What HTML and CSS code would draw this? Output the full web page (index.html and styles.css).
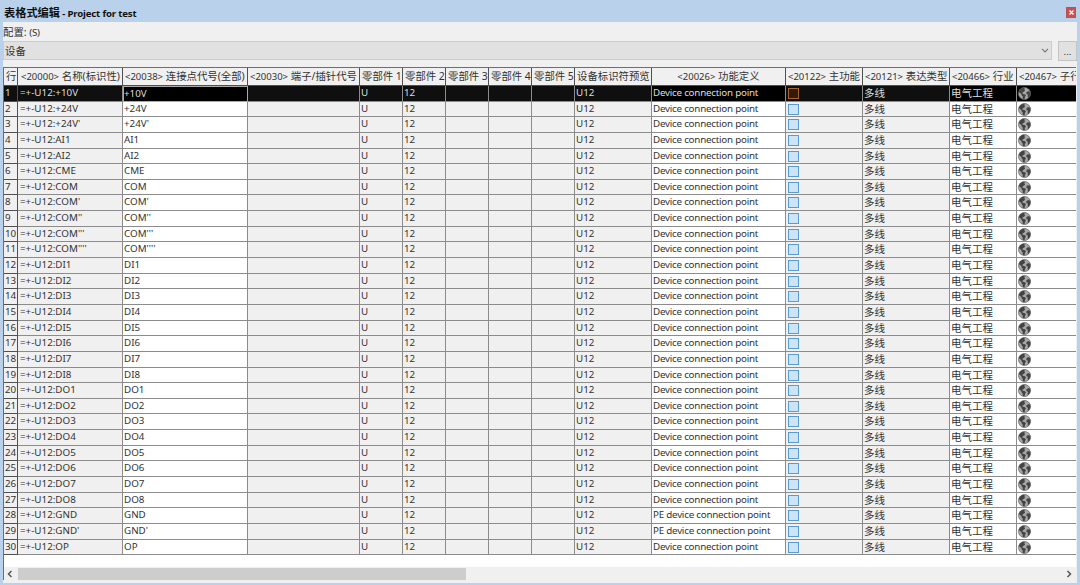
FILE: index.html
```html
<!DOCTYPE html>
<html lang="zh-CN">
<head>
  <meta charset="UTF-8" />
  <title>表格式编辑 - Project for test</title>
  <link rel="stylesheet" href="styles.css">
</head>
<body>
  <!-- shared icons -->
  <svg class="defs" width="0" height="0">
    <symbol id="globe" viewBox="0 0 13 13">
      <circle class="sea" cx="6.5" cy="6.5" r="6" />
      <path class="land" d="M.8 5 L2 2.6 L4.4 .9 L6.9 .8 L6.2 2.2 L7.2 3 L6.3 4.5 L5 5.2 L4.2 6 L5 6.7 L7 7.3 L8 8.5 L7 10 L6.6 12.3 L4.8 12 L4.7 9.8 L3.6 8.2 L3.3 6.9 L1.9 5.9Z M12.3 4.8 L12.4 7.2 L11.5 9.6 L9.9 11.2 L9.7 9.3 L9.9 7.8 L8.5 7 L8.2 5.8 L9.2 4.6 L10.8 4.3Z" />
    </symbol>
  </svg>

  <div class="window">
    <div class="titlebar">
      <h1><span class="title-cn">表格式编辑</span> - Project for test</h1>
      <button class="close" aria-label="关闭">
        <svg width="5" height="5" viewBox="0 0 5 5"><path d="M.5 .5 L4.5 4.5 M4.5 .5 L.5 4.5" /></svg>
      </button>
    </div>

    <div class="content">
      <div class="config-label">配置: <span>(S)</span></div>
      <div class="config-row">
        <div class="combo">
          <span>设备</span>
          <svg width="8" height="5" viewBox="0 0 8 5"><path d="M1 .8 L4 3.9 L7 .8" /></svg>
        </div>
        <button class="more">...</button>
      </div>

      <div class="grid">
        <div class="row head">
          <div>行</div>
          <div><i>&lt;20000&gt;</i> 名称(标识性)</div>
          <div><i>&lt;20038&gt;</i> 连接点代号(全部)</div>
          <div><i>&lt;20030&gt;</i> 端子/插针代号</div>
          <div>零部件 1</div>
          <div>零部件 2</div>
          <div>零部件 3</div>
          <div>零部件 4</div>
          <div>零部件 5</div>
          <div>设备标识符预览</div>
          <div class="center"><i>&lt;20026&gt;</i> 功能定义</div>
          <div><i>&lt;20122&gt;</i> 主功能</div>
          <div><i>&lt;20121&gt;</i> 表达类型</div>
          <div><i>&lt;20466&gt;</i> 行业</div>
          <div><i>&lt;20467&gt;</i> 子行</div>
        </div>
        <div id="rows"></div>
        <div class="scrollbar">
          <svg width="6" height="8" viewBox="0 0 6 8"><path d="M4.5 1 L1.5 4 L4.5 7" /></svg>
          <div class="track"><div class="thumb"></div></div>
          <svg width="6" height="8" viewBox="0 0 6 8"><path d="M1.5 1 L4.5 4 L1.5 7" /></svg>
        </div>
      </div>
    </div>
  </div>

  <script>
    const pins = [
      "+10V", "+24V", "+24V'", "AI1", "AI2", "CME",
      "COM", "COM'", "COM''", "COM'''", "COM''''",
      "DI1", "DI2", "DI3", "DI4", "DI5", "DI6", "DI7", "DI8",
      "DO1", "DO2", "DO3", "DO4", "DO5", "DO6", "DO7", "DO8",
      "GND", "GND'", "OP"
    ];

    document.getElementById('rows').innerHTML = pins.map((pin, i) => {
      const def = (pin.startsWith('GND') ? 'PE device' : 'Device') + ' connection point';
      return `<div class="row${i === 0 ? ' selected' : ''}">
        <div class="num">${i + 1}</div>
        <div class="name">=+-U12:${pin}</div>
        <div class="edit pin">${pin}</div>
        <div></div>
        <div>U</div>
        <div>12</div>
        <div></div>
        <div></div>
        <div></div>
        <div>U12</div>
        <div class="edit def">${def}</div>
        <div><span class="check"></span></div>
        <div class="cn">多线</div>
        <div class="edit cn">电气工程</div>
        <div class="edit"><svg class="globe" width="13" height="13"><use href="#globe" /></svg></div>
      </div>`;
    }).join('');
  </script>
</body>
</html>
```

FILE: styles.css
```css
:root {
  --frame: #b9d1ea;
  --face: #f0f0f0;
  --line: #8c8c8c;
  --line-dark: #505050;
  --text: #333333;
}

* {
  box-sizing: border-box;
}

body {
  margin: 0;
  width: 1080px;
  height: 585px;
  overflow: hidden;
  font-family: "Noto Sans", "Noto Sans CJK SC", sans-serif;
  font-size: 9.8px;
  color: var(--text);
}

.defs {
  position: absolute;
}

.window {
  display: flex;
  flex-direction: column;
  height: 585px;
  padding: 0 3px 2px;
  background-color: var(--frame);
}

.titlebar {
  display: flex;
  justify-content: space-between;
  align-items: center;
  height: 22px;
  padding: 2px 1px 0;
}

h1 {
  margin: 2px 0 0;
  font-size: 9.6px;
  font-weight: 700;
  letter-spacing: -0.17px;
  line-height: 18px;
  color: #111111;
}

.title-cn {
  font-size: 11.2px;
  letter-spacing: 0;
}

.close {
  display: flex;
  align-items: center;
  justify-content: center;
  width: 10px;
  height: 11px;
  padding: 0;
  border: 1px solid #b9525a;
  background-color: #c75050;
}

.close svg {
  stroke: #ffffff;
  stroke-width: 1.3;
}

.content {
  display: flex;
  flex: 1;
  flex-direction: column;
  min-height: 0;
  background-color: var(--face);
}

.config-label {
  height: 19px;
  line-height: 21px;
  font-size: 10.4px;
}

.config-label span {
  font-size: 9.8px;
  letter-spacing: -0.3px;
}

.config-row {
  display: flex;
  justify-content: space-between;
  height: 19px;
}

.combo {
  display: flex;
  align-items: center;
  justify-content: space-between;
  width: 1049px;
  padding: 0 2px 0 1px;
  border: 1px solid #cccccc;
  background-color: #e1e1e1;
  font-size: 10.4px;
}

.combo svg,
.scrollbar svg {
  fill: none;
  stroke: #777777;
  stroke-width: 1.1;
}

.more {
  width: 19px;
  height: 20px;
  padding: 0;
  border: 1px solid #c4c4c4;
  background-color: #e1e1e1;
  font: inherit;
  color: var(--text);
}

.grid {
  display: flex;
  flex: 1;
  flex-direction: column;
  min-height: 0;
  margin: 7px 1px 3px 0;
  border-top: 1px solid #6e6e6e;
  border-left: 1px solid #6e6e6e;
  background-color: #ffffff;
}

.row {
  display: grid;
  grid-template-columns: 14px 105px 125px 112px 43px 43px 43px 43px 43px 77px 134px 77px 87px 67px 1fr;
  height: 15.655px;
}

.row > div {
  min-width: 0;
  padding-left: 1px;
  border-right: 1px solid var(--line);
  border-bottom: 1px solid var(--line);
  background-color: var(--face);
  line-height: 14.8px;
  white-space: nowrap;
  overflow: hidden;
}

.row > div:last-child {
  border-right: 0;
}

.row > .edit {
  background-color: #ffffff;
}

.row > .num {
  border-right-color: var(--line-dark);
  border-bottom-color: var(--line-dark);
}

.row > .name {
  padding-left: 2px;
}

.row > .def {
  letter-spacing: -0.23px;
}

.row > .cn {
  font-size: 10.5px;
}

.head {
  height: 18px;
}

.row.head > div {
  padding-left: 2px;
  border-right-color: var(--line-dark);
  border-bottom-color: var(--line-dark);
  font-size: 10.4px;
  line-height: 17px;
}

.row.head > div:nth-child(2) {
  padding-left: 3px;
}

.row.head > .center {
  padding-left: 0;
  text-align: center;
}

.head i {
  font-size: 9.5px;
  font-style: normal;
}

.selected > div {
  background-color: #0f0f0f;
  color: #dddddd;
}

.selected > .edit {
  background-color: #000000;
}

.selected > .pin {
  border: 1px solid #aaaaaa;
  padding-left: 0;
  line-height: 13px;
}

.check {
  display: block;
  width: 11px;
  height: 11px;
  margin: 2px 0 0 1px;
  border: 1px solid #5a9bd0;
  background-color: #cce4f7;
}

.selected .check {
  border-color: #a5642f;
  background-color: #331b08;
}

.globe {
  display: block;
  margin-top: 1px;
}

.sea {
  fill: #a8a8a8;
  stroke: #6a6a6a;
  stroke-width: 0.8;
}

.land {
  fill: #444444;
}

.selected .sea {
  fill: #666666;
  stroke: #999999;
}

.selected .land {
  fill: #c0c0c0;
}

.scrollbar {
  display: flex;
  align-items: center;
  justify-content: space-between;
  height: 13px;
  margin-top: auto;
  padding: 0 4px 0 3px;
  background-color: var(--face);
}

.scrollbar svg {
  stroke: #555555;
  stroke-width: 1.5;
}

.track {
  flex: 1;
  height: 12px;
  margin: 0 5px;
}

.thumb {
  width: 448px;
  height: 12px;
  background-color: #cdcdcd;
}
```
